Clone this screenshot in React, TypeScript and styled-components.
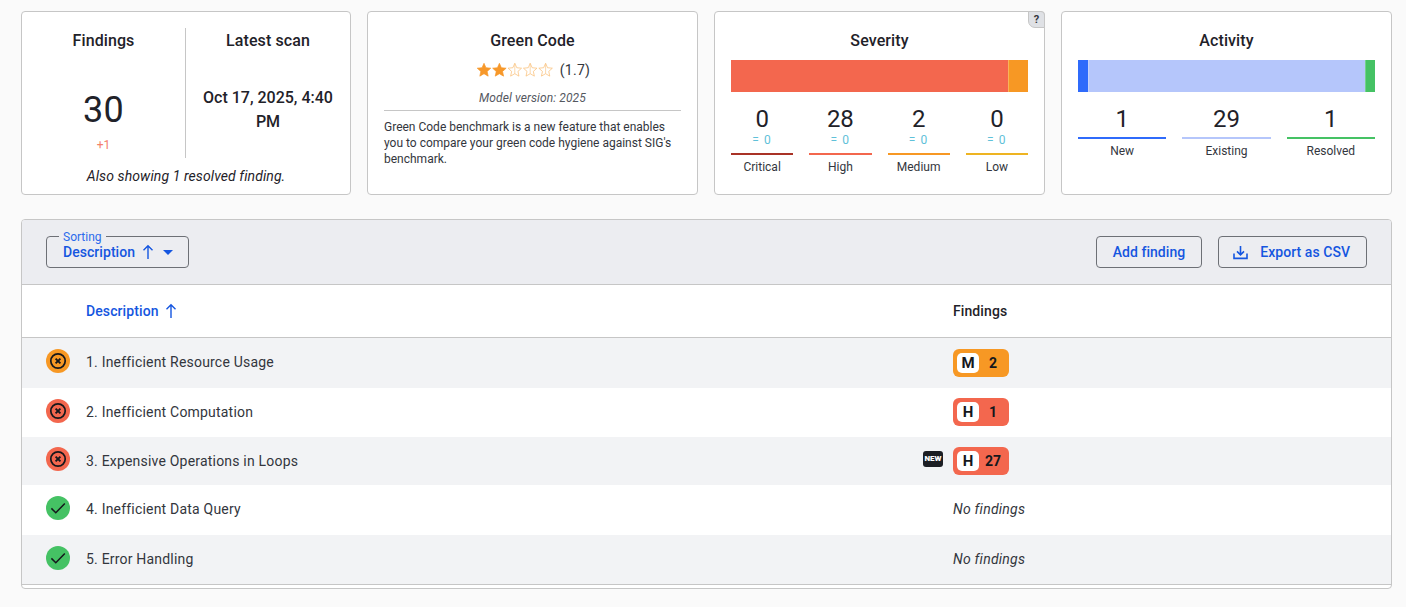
import React from "react";
import styled, { createGlobalStyle } from "styled-components";

const Global = createGlobalStyle`
  html, body { margin: 0; padding: 0; background: #fafafa; }
  body { font-family: Roboto, "Liberation Sans", sans-serif; color: #1f2229; overflow: hidden; }
  * { box-sizing: border-box; }
`;

const Page = styled.div`
  width: 1406px;
  height: 607px;
  padding: 11px 14px 0 21px;
  display: flex;
  flex-direction: column;
  gap: 24px;
`;

const Cards = styled.div`
  display: grid;
  grid-template-columns: 330px 331px 331px 331px;
  gap: 16px;
  height: 184px;
`;

const Card = styled.section`
  position: relative;
  background: #fff;
  border: 1px solid #c6c6c6;
  border-radius: 4px;
  padding: 16px;
  display: flex;
  flex-direction: column;
  min-width: 0;
`;

const Title = styled.h3`
  margin: 1px 0 0;
  font-size: 16px;
  line-height: 24px;
  font-weight: 500;
  text-align: center;
  letter-spacing: 0.1px;
  color: #1f2229;
`;

const SummaryCard = styled(Card)`
  padding: 16px 0 0;
`;

const SummaryColumns = styled.div`
  display: grid;
  grid-template-columns: 163px 1fr;
  height: 130px;
`;

const SummaryColumn = styled.div<{ $divided?: boolean }>`
  display: flex;
  flex-direction: column;
  align-items: center;
  padding: 0 16px;
  ${(p) => (p.$divided ? "border-left: 1px solid #c6c6c6;" : "")}
`;

const BigNumber = styled.div`
  font-size: 36px;
  line-height: 44px;
  margin-top: 35px;
  letter-spacing: 0.2px;
`;

const Delta = styled.div`
  font-size: 12px;
  line-height: 16px;
  margin-top: 5px;
  color: #f4806b;
`;

const ScanDate = styled.div`
  font-size: 16px;
  line-height: 24px;
  font-weight: 500;
  text-align: center;
  margin-top: 33px;
`;

const SummaryNote = styled.div`
  font-size: 14px;
  line-height: 20px;
  font-style: italic;
  text-align: center;
  margin-top: 8px;
  letter-spacing: 0.1px;
`;

const RatingRow = styled.div`
  display: flex;
  align-items: center;
  justify-content: center;
  height: 20px;
  margin-top: 7px;
  padding-left: 2px;
  gap: 7px;
  font-size: 14px;
  letter-spacing: 0.3px;
  color: #33363d;
`;

const Stars = styled.svg`
  display: block;
`;

const ModelVersion = styled.div`
  font-size: 12px;
  line-height: 16px;
  font-style: italic;
  text-align: center;
  color: #55585f;
  margin-top: 10px;
  letter-spacing: 0.1px;
  padding-bottom: 4px;
  border-bottom: 1px solid #c6c6c6;
`;

const Blurb = styled.p`
  margin: 8px 0 0;
  font-size: 12px;
  line-height: 16px;
  letter-spacing: 0;
  color: #33363d;
`;

const HelpTab = styled.div`
  position: absolute;
  top: -1px;
  right: -1px;
  width: 17px;
  height: 17px;
  background: #dfe1e5;
  border: 1px solid #c6c6c6;
  border-radius: 0 4px 0 7px;
  font-size: 11px;
  font-weight: 700;
  line-height: 15px;
  text-align: center;
  color: #33363d;
`;

const StackBar = styled.div`
  display: flex;
  height: 32px;
  margin-top: 7px;
`;

const Segment = styled.div<{ $color: string; $grow: number }>`
  flex: ${(p) => p.$grow} 0 0;
  background: ${(p) => p.$color};
  box-shadow: inset 1px 0 rgba(255, 255, 255, 0.25);
  &:first-child { box-shadow: none; }
`;

const Metrics = styled.div<{ $cols: number }>`
  display: grid;
  grid-template-columns: repeat(${(p) => p.$cols}, 1fr);
  gap: 16px;
  margin-top: 13px;
`;

const Metric = styled.div`
  display: flex;
  flex-direction: column;
  align-items: stretch;
  text-align: center;
`;

const MetricValue = styled.div`
  font-size: 24px;
  line-height: 28px;
`;

const MetricDelta = styled.div`
  font-size: 12px;
  line-height: 14px;
  color: #5fc1d9;
  letter-spacing: 1.1px;
`;

const MetricRule = styled.div<{ $color: string; $spaced?: boolean }>`
  height: 2px;
  background: ${(p) => p.$color};
  margin-top: ${(p) => (p.$spaced ? "6px" : "4px")};
`;

const MetricLabel = styled.div`
  font-size: 12px;
  line-height: 16px;
  margin-top: 4px;
  color: #33363d;
  letter-spacing: 0;
`;

const Panel = styled.section`
  border: 1px solid #c6c6c6;
  border-radius: 4px;
  background: #fff;
  height: 370px;
  overflow: hidden;
  display: flex;
  flex-direction: column;
`;

const Toolbar = styled.div`
  height: 65px;
  flex: none;
  background: #ecedf1;
  border-bottom: 1px solid #c6c6c6;
  display: flex;
  align-items: center;
  justify-content: space-between;
  padding: 0 24px;
`;

const Actions = styled.div`
  display: flex;
  gap: 16px;
`;

const OutlineButton = styled.button`
  height: 32px;
  display: flex;
  align-items: center;
  gap: 12px;
  border: 1px solid #6d7076;
  border-radius: 4px;
  background: transparent;
  padding: 0 16px;
  color: #1556e0;
  font: 500 14px/20px Roboto, sans-serif;
  letter-spacing: 0.05px;
  svg { flex: none; }
`;

const IconButton = styled(OutlineButton)`
  padding-left: 14px;
`;

const SortSelect = styled(OutlineButton)`
  position: relative;
  width: 143px;
  gap: 7px;
`;

const SortLegend = styled.span`
  position: absolute;
  top: -7px;
  left: 12px;
  padding: 0 4px;
  background: #ecedf1;
  font-size: 12px;
  font-weight: 400;
  line-height: 14px;
  color: #2b6bec;
  letter-spacing: 0;
`;

const Caret = styled.span`
  flex: none;
  width: 0;
  height: 0;
  border-left: 5px solid transparent;
  border-right: 5px solid transparent;
  border-top: 5px solid #1556e0;
  margin-left: 2px;
`;

const HeaderRow = styled.div`
  height: 53px;
  flex: none;
  display: grid;
  grid-template-columns: 64px 867px 1fr;
  align-items: center;
  border-bottom: 1px solid #c6c6c6;
  font-size: 14px;
  font-weight: 500;
  letter-spacing: 0.1px;
`;

const SortHeader = styled.div`
  display: flex;
  align-items: center;
  gap: 6px;
  color: #1556e0;
`;

const Row = styled.div<{ $h: number; $shaded: boolean }>`
  height: ${(p) => p.$h}px;
  flex: none;
  padding-bottom: 1px;
  display: grid;
  grid-template-columns: 64px 867px 1fr;
  align-items: center;
  background: ${(p) => (p.$shaded ? "#f2f3f5" : "#fff")};
  font-size: 14px;
  letter-spacing: 0.2px;
  color: #33363d;
`;

const RowText = styled.div`
  align-self: start;
  padding-top: 14px;
  line-height: 20px;
`;

const RowEnd = styled.div`
  border-top: 1px solid #c6c6c6;
  flex: 1;
`;

const StatusCell = styled.div`
  display: flex;
  padding-left: 24px;
`;

const StatusCircle = styled.div<{ $color: string }>`
  width: 24px;
  height: 24px;
  margin-bottom: 3px;
  border-radius: 50%;
  background: ${(p) => p.$color};
  display: flex;
  align-items: center;
  justify-content: center;
`;

const FindingsCell = styled.div`
  position: relative;
  display: flex;
  align-items: center;
`;

const NewTag = styled.span`
  position: absolute;
  left: -30px;
  top: 4px;
  width: 20px;
  height: 16px;
  background: #1c1e24;
  border-radius: 3px;
  color: #fff;
  font-size: 8px;
  line-height: 16px;
  font-weight: 900;
  letter-spacing: 0;
  text-align: center;
`;

const Badge = styled.div<{ $color: string }>`
  width: 56px;
  height: 28px;
  border-radius: 6px;
  background: ${(p) => p.$color};
  display: flex;
  align-items: center;
  padding: 4px;
  font-size: 14px;
  font-weight: 700;
  letter-spacing: 0;
  color: #15171c;
`;

const BadgeLetter = styled.span`
  flex: none;
  width: 22px;
  height: 20px;
  border-radius: 5px;
  background: #fff;
  text-align: center;
  font-size: 15px;
  line-height: 20px;
`;

const BadgeCount = styled.span`
  flex: 1;
  padding-left: 2px;
  text-align: center;
  line-height: 20px;
`;

const NoFindings = styled(RowText)`
  font-style: italic;
  letter-spacing: 0.25px;
`;

const ArrowUp = () => (
  <svg width="12" height="16" viewBox="0 0 12 16" fill="none" stroke="#1556e0" strokeWidth="1.4">
    <path d="M6 15V2M1.5 6.2 6 1.8l4.5 4.4" />
  </svg>
);

const STAR = "M7 .3 8.94 4.73 13.75 5.2 10.14 8.42 11.17 13.14 7 10.7 2.83 13.14 3.86 8.42 .25 5.2 5.06 4.73Z";

const StarRating = () => (
  <Stars width="76" height="14" viewBox="0 0 76 14">
    {[0, 1, 2, 3, 4].map((i) => (
      <g key={i} transform={`translate(${i * 15.4} 0)`}>
        <path
          d={STAR}
          fill={i < 2 ? "#f7982a" : "#fff"}
          stroke={i < 2 ? "#f7982a" : "#f9bb70"}
          strokeWidth="0.7"
        />
        {i >= 2 && <path d="M7 .5V10.7" stroke="#f9c88c" strokeWidth="0.7" />}
      </g>
    ))}
  </Stars>
);

const CrossIcon = () => (
  <svg width="18" height="18" viewBox="0 0 18 18" fill="none" stroke="#15171c" strokeWidth="1.7">
    <circle cx="9" cy="9" r="7.2" />
    <path d="M6.6 6.6l4.8 4.8M11.4 6.6l-4.8 4.8" strokeWidth="1.9" />
  </svg>
);

const CheckIcon = () => (
  <svg width="18" height="18" viewBox="0 0 18 18" fill="none" stroke="#15171c" strokeWidth="1.5">
    <path d="M2.4 9.4 6.8 13.8 15.8 4.4" />
  </svg>
);

const DownloadIcon = () => (
  <svg width="15" height="15" viewBox="0 0 15 15" fill="none" stroke="#1556e0" strokeWidth="1.6">
    <path d="M7.5 1v8.4M4 6.4l3.5 3.4L11 6.4" />
    <path d="M1 8.6v4.8h13V8.6" />
  </svg>
);

const severity = [
  { label: "Critical", value: 0, color: "#a93226" },
  { label: "High", value: 28, color: "#f3674e" },
  { label: "Medium", value: 2, color: "#f79824" },
  { label: "Low", value: 0, color: "#eeb422" },
];

const activity = [
  { label: "New", value: 1, color: "#2f6bfb" },
  { label: "Existing", value: 29, color: "#b5c6fb" },
  { label: "Resolved", value: 1, color: "#45c264" },
];

const RED = "#f3674e";
const ORANGE = "#f79824";
const GREEN = "#45c264";

const rows = [
  { h: 50, text: "1. Inefficient Resource Usage", status: ORANGE, letter: "M", count: 2 },
  { h: 49, text: "2. Inefficient Computation", status: RED, letter: "H", count: 1 },
  { h: 48, text: "3. Expensive Operations in Loops", status: RED, letter: "H", count: 27, isNew: true },
  { h: 50, text: "4. Inefficient Data Query", status: GREEN },
  { h: 49, text: "5. Error Handling", status: GREEN },
];

export default function App() {
  return (
    <Page>
      <Global />
      <Cards>
        <SummaryCard>
          <SummaryColumns>
            <SummaryColumn>
              <Title>Findings</Title>
              <BigNumber>30</BigNumber>
              <Delta>+1</Delta>
            </SummaryColumn>
            <SummaryColumn $divided>
              <Title>Latest scan</Title>
              <ScanDate>Oct 17, 2025, 4:40 PM</ScanDate>
            </SummaryColumn>
          </SummaryColumns>
          <SummaryNote>Also showing 1 resolved finding.</SummaryNote>
        </SummaryCard>

        <Card>
          <Title>Green Code</Title>
          <RatingRow>
            <StarRating />
            <span>(1.7)</span>
          </RatingRow>
          <ModelVersion>Model version: 2025</ModelVersion>
          <Blurb>
            Green Code benchmark is a new feature that enables you to compare your green code hygiene against SIG's
            benchmark.
          </Blurb>
        </Card>

        <Card>
          <HelpTab>?</HelpTab>
          <Title>Severity</Title>
          <StackBar>
            {severity.filter((s) => s.value > 0).map((s) => (
              <Segment key={s.label} $color={s.color} $grow={s.value} />
            ))}
          </StackBar>
          <Metrics $cols={4}>
            {severity.map((s) => (
              <Metric key={s.label}>
                <MetricValue>{s.value}</MetricValue>
                <MetricDelta>= 0</MetricDelta>
                <MetricRule $color={s.color} $spaced />
                <MetricLabel>{s.label}</MetricLabel>
              </Metric>
            ))}
          </Metrics>
        </Card>

        <Card>
          <Title>Activity</Title>
          <StackBar>
            {activity.map((s) => (
              <Segment key={s.label} $color={s.color} $grow={s.value} />
            ))}
          </StackBar>
          <Metrics $cols={3}>
            {activity.map((s) => (
              <Metric key={s.label}>
                <MetricValue>{s.value}</MetricValue>
                <MetricRule $color={s.color} />
                <MetricLabel>{s.label}</MetricLabel>
              </Metric>
            ))}
          </Metrics>
        </Card>
      </Cards>

      <Panel>
        <Toolbar>
          <SortSelect>
            <SortLegend>Sorting</SortLegend>
            Description <ArrowUp />
            <Caret />
          </SortSelect>
          <Actions>
            <OutlineButton>Add finding</OutlineButton>
            <IconButton>
              <DownloadIcon />
              Export as CSV
            </IconButton>
          </Actions>
        </Toolbar>
        <HeaderRow>
          <span />
          <SortHeader>
            Description <ArrowUp />
          </SortHeader>
          <div>Findings</div>
        </HeaderRow>
        {rows.map((r, i) => (
          <Row key={r.text} $h={r.h} $shaded={i % 2 === 0}>
            <StatusCell>
              <StatusCircle $color={r.status}>{r.count ? <CrossIcon /> : <CheckIcon />}</StatusCircle>
            </StatusCell>
            <RowText>{r.text}</RowText>
            {r.count ? (
              <FindingsCell>
                {r.isNew && <NewTag>NEW</NewTag>}
                <Badge $color={r.status}>
                  <BadgeLetter>{r.letter}</BadgeLetter>
                  <BadgeCount>{r.count}</BadgeCount>
                </Badge>
              </FindingsCell>
            ) : (
              <NoFindings>No findings</NoFindings>
            )}
          </Row>
        ))}
        <RowEnd />
      </Panel>
    </Page>
  );
}
